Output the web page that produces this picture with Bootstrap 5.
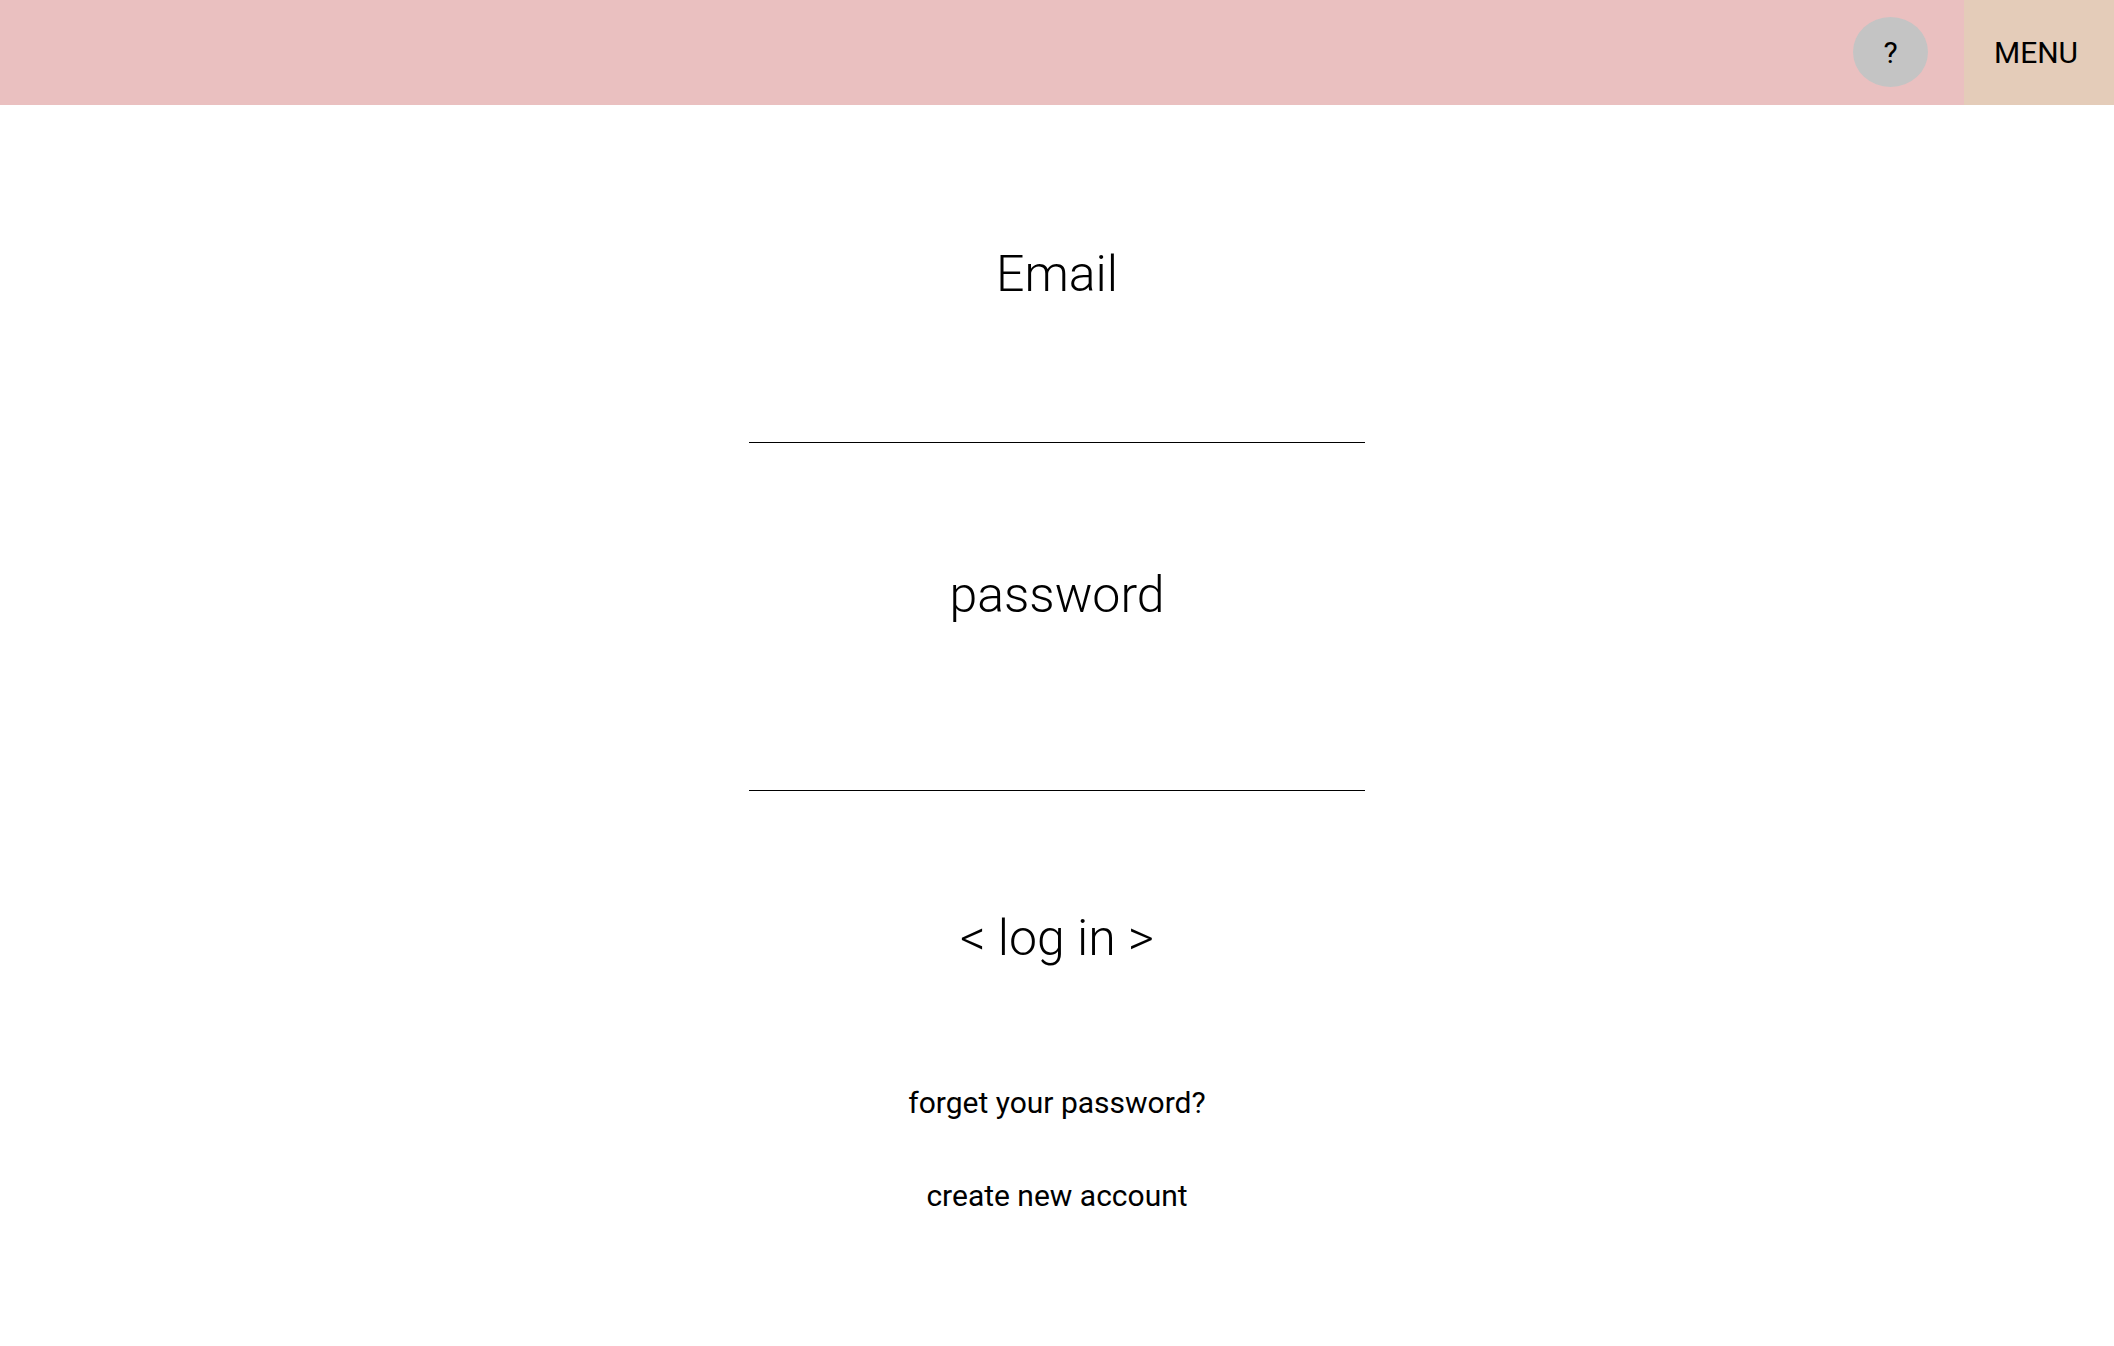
<!DOCTYPE html>
<html lang="en">
<head>
<meta charset="utf-8">
<meta name="viewport" content="width=device-width, initial-scale=1">
<title>Log in</title>
<link href="https://cdn.jsdelivr.net/npm/bootstrap@5.3.0/dist/css/bootstrap.min.css" rel="stylesheet">
<style>
body { font-family: Roboto, sans-serif; color: #000; background: #fff; }
.topbar { height: 105px; background: #eac0c0; }
.help-btn { width: 75px; height: 70px; margin: 0 36px 1px 0; padding: 2px 0 0; border-radius: 50%; background: #c4c4c4; }
.menu-btn { width: 150px; padding: 0 6px 0 0; background: #e4ccb9; }
.small-text { font-size: 30px; line-height: 36px; color: #000; }
.big-text { font-size: 50px; line-height: 60px; font-weight: 300; color: #000; }
.login-form { width: 616px; max-width: 100%; padding-top: 139px; }
.line-input { height: 139px; margin-bottom: 122px; border: 0; border-bottom: 1px solid #000; border-radius: 0; background: transparent; }
.tall-input { height: 166px; margin-bottom: 117px; }
.form-links { margin-top: 117px; gap: 57px; }
</style>
</head>
<body>
<header class="topbar d-flex justify-content-end align-items-center">
<button type="button" class="btn help-btn small-text border-0" aria-label="Help">?</button>
<button type="button" class="btn menu-btn small-text h-100 border-0 rounded-0">MENU</button>
</header>
<main>
<form class="login-form mx-auto d-flex flex-column align-items-center">
<label for="email" class="big-text text-center">Email</label>
<input id="email" type="email" class="form-control line-input big-text">
<label for="password" class="big-text text-center">password</label>
<input id="password" type="password" class="form-control line-input tall-input big-text">
<button type="submit" class="btn big-text border-0 p-0">&lt; log in &gt;</button>
<div class="form-links d-flex flex-column align-items-center">
<a href="#" class="small-text text-decoration-none">forget your password?</a>
<a href="#" class="small-text text-decoration-none">create new account</a>
</div>
</form>
</main>
<script src="https://cdn.jsdelivr.net/npm/bootstrap@5.3.0/dist/js/bootstrap.bundle.min.js"></script>
</body>
</html>
